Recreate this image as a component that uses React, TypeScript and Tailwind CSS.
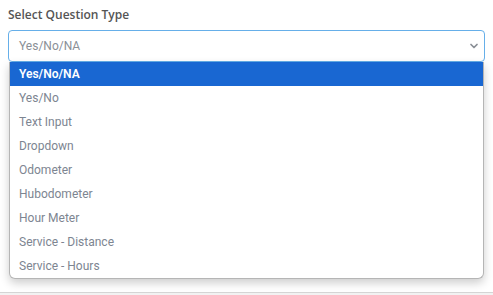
import { ChevronDown } from "lucide-react";

const options = [
  "Yes/No/NA",
  "Yes/No",
  "Text Input",
  "Dropdown",
  "Odometer",
  "Hubodometer",
  "Hour Meter",
  "Service - Distance",
  "Service - Hours",
];

export default function App() {
  const selected = options[0];

  return (
    <div className="relative h-[295px] w-[493px] overflow-hidden bg-white font-['Roboto',sans-serif]">
      <div className="px-2 pt-[7px]">
        <label className="block font-['Open_Sans',sans-serif] text-[12px] font-semibold leading-[16px] text-[#555]">
          Select Question Type
        </label>
        <div className="relative mt-[7px] w-[477px]">
          <div className="flex h-[32px] items-center justify-between rounded-[4px] border border-[#66afe9] bg-white pl-[10px] pr-[4px] text-[12px] text-[#8a8f96]">
            <span>{selected}</span>
            <ChevronDown className="h-[12px] w-[12px] text-[#8a8f96]" strokeWidth={3.5} />
          </div>
          <ul className="absolute left-[1px] right-[1px] top-[32px] z-10 overflow-hidden rounded-b-[6px] border border-t-0 border-[#b5b5b5] bg-white shadow-[0_4px_10px_rgba(0,0,0,0.2)]">
            {options.map((o) => (
              <li
                key={o}
                className={
                  o === selected
                    ? "flex h-[24px] items-center bg-[#1967d2] pl-[9px] text-[12px] font-semibold text-white"
                    : "flex h-[24px] items-center pl-[9px] text-[12px] text-[#7d8591]"
                }
              >
                {o}
              </li>
            ))}
          </ul>
        </div>
      </div>
      <div className="absolute bottom-0 left-0 right-0 h-[3px] border-t border-[#d5d5d5] bg-[#f2f2f2]" />
    </div>
  );
}
